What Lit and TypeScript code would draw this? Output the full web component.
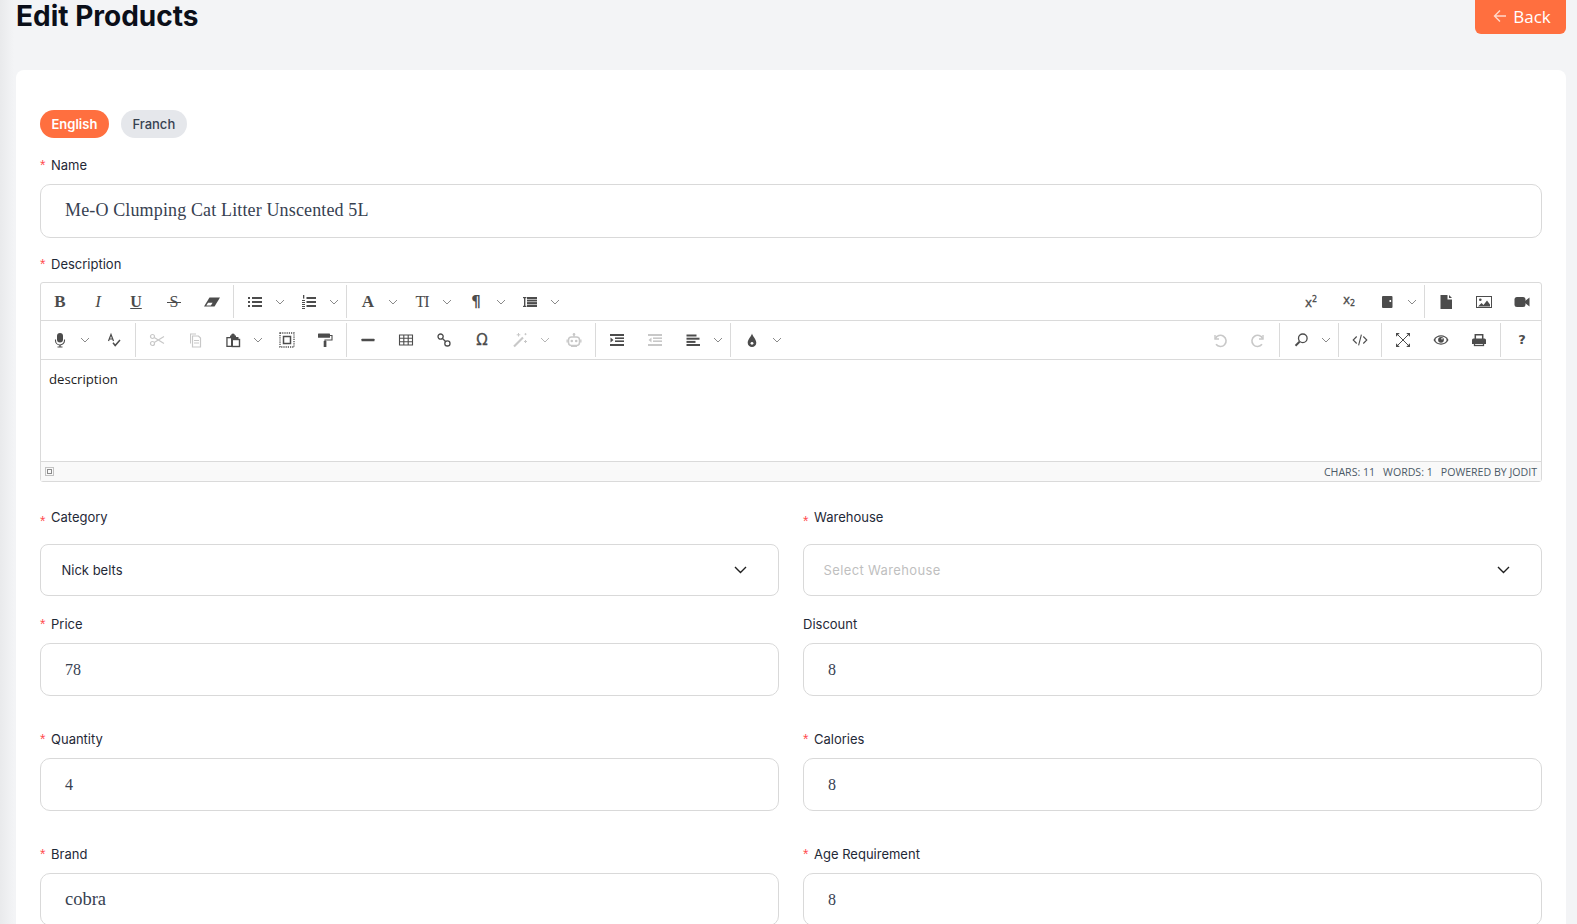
import { LitElement, html, css, svg } from "lit";
import { customElement } from "lit/decorators.js";

const icon = (body: unknown) => html`<svg class="ico" viewBox="0 0 16 16" fill="currentColor">${body}</svg>`;
const line = "fill:none;stroke:currentColor;";

const ICONS: Record<string, unknown> = {
  eraser: icon(svg`<path d="M5.5 3.500H16L10.5 12.500H0z"/><path d="M4 8.800h4.600l-1.700 2.700H2.300z" fill="#fff"/>`),
  list: icon(svg`<rect x="5" y="3" width="10" height="2"/><rect x="5" y="7" width="10" height="2"/><rect x="5" y="11" width="10" height="2"/><rect x="1" y="3" width="2" height="2"/><rect x="1" y="7" width="2" height="2"/><rect x="1" y="11" width="2" height="2"/>`),
  ol: icon(svg`<rect x="5.5" y="3" width="9.5" height="2"/><rect x="5.5" y="7" width="9.5" height="2"/><rect x="5.5" y="11" width="9.5" height="2"/><rect x="2" y="1" width="1.3" height="3.6"/><rect x="1" y="6" width="3" height="1"/><rect x="1" y="8" width="3" height="1"/><rect x="1" y="10" width="3" height="1"/><rect x="1" y="12" width="3" height="1"/><rect x="1" y="14" width="3" height="1"/>`),
  lineheight: icon(svg`<rect x="5" y="3" width="10" height="10"/><rect x="5" y="5" width="10" height=".6" fill="#fff"/><rect x="5" y="7.500" width="10" height=".6" fill="#fff"/><rect x="5" y="10" width="10" height=".6" fill="#fff"/><rect x="2" y="3" width="1.4" height="10"/><rect x="1" y="3" width="3.4" height="1.2"/><rect x="1" y="11.8" width="3.4" height="1.2"/>`),
  book: icon(svg`<path d="M4 2h8.5a1 1 0 0 1 1 1v10a1 1 0 0 1-1 1H4a1 1 0 0 1-1-1V3a1 1 0 0 1 1-1z"/><rect x="10.5" y="6" width="1.6" height="2" fill="#fff"/>`),
  file: icon(svg`<path d="M2.5 1H9.5V5.5H14V15H2.5z"/><path d="M11 1l3 3h-3z"/>`),
  image: icon(svg`<rect x=".5" y="2.5" width="15" height="11" style="${line}stroke-width:1"/><path d="M2 12.5l3.5-3.5 2 2 3.5-4.5 3 4v2z"/><circle cx="4.3" cy="5.8" r="1.3"/>`),
  video: icon(svg`<rect x=".5" y="3" width="11" height="10" rx="2.5"/><path d="M11 7l4.5-3.5v9L11 9z"/>`),
  mic: icon(svg`<rect x="5" y="1" width="6" height="9.4" rx="3"/><path d="M3.5 7.5v1a4.5 4.5 0 0 0 9 0v-1" style="${line}stroke-width:1.1"/><path d="M8 13v2M5.5 15h5" style="${line}stroke-width:1.2"/>`),
  spell: icon(svg`<path d="M2.500 9L5 2.500 7.500 9M3.400 7h3.200" style="${line}stroke-width:1.2"/><path d="M7 10.800l2.200 2.700 4.800-5.500" style="${line}stroke-width:1.500"/>`),
  cut: icon(svg`<circle cx="3.5" cy="4.5" r="2" style="${line}stroke-width:1.2"/><circle cx="3.5" cy="11.5" r="2" style="${line}stroke-width:1.2"/><path d="M5.2 5.5L15 11.5M5.2 10.5L15 4.5" style="${line}stroke-width:1.2"/>`),
  copy: icon(svg`<path d="M3 1.5h6v1H4v9H3z"/><path d="M5.5 4h6l2 2v9h-8z" style="${line}stroke-width:1.2"/><rect x="7" y="8" width="5" height="1"/><rect x="7" y="10.5" width="5" height="1"/>`),
  paste: icon(svg`<path d="M5 3.500h1.100a1.900 1.900 0 0 1 3.800 0H11v1.500h2.500v2H7.300v8H1.300V5H5z"/><rect x="2.600" y="6.300" width="3.400" height="7.400" fill="#fff"/><rect x="7.300" y="7.500" width="7.200" height="7" fill="#fff" style="${line}stroke-width:1.400"/>`),
  selectall: icon(svg`<rect x="1" y="1" width="14" height="14" style="${line}stroke-width:1.300;stroke-dasharray:1.200 1"/><rect x="4.5" y="4.5" width="7" height="7" style="${line}stroke-width:1.5"/>`),
  paint: icon(svg`<rect x="1" y="1.5" width="12" height="4.3" rx=".6"/><path d="M13 3.5h2V8H8v2" style="${line}stroke-width:1.1"/><rect x="6.7" y="9" width="2.7" height="6"/>`),
  hr: icon(svg`<rect x="1.5" y="6.7" width="13" height="2.6" rx=".6"/>`),
  table: icon(svg`<path d="M1.5 3h13v10h-13zM1.5 6.3h13M1.5 9.7h13M5.8 3v10M10.2 3v10" style="${line}stroke-width:1.1"/>`),
  link: icon(svg`<circle cx="4.6" cy="4.6" r="2.6" style="${line}stroke-width:1.300"/><circle cx="11.4" cy="11.4" r="2.6" style="${line}stroke-width:1.300"/><path d="M6 6l4 4" style="${line}stroke-width:1.300"/>`),
  magic: icon(svg`<path d="M2 14.5L11 5.5" style="${line}stroke-width:2.2"/><path d="M6.5 1v3.5M4.7 2.8h3.6M13.5 8v3M12 9.5h3M13.5 1.2v2M12.5 2.2h2" style="${line}stroke-width:1"/>`),
  robot: icon(svg`<rect x="2.5" y="5" width="11" height="8.6" rx="3" style="${line}stroke-width:1.5"/><circle cx="5.8" cy="9" r="1.3"/><circle cx="10.2" cy="9" r="1.3"/><circle cx="8" cy="2.4" r="1.3"/><rect x="7.5" y="3" width="1" height="2"/><rect x=".5" y="7.5" width="1.3" height="3"/><rect x="14.2" y="7.5" width="1.3" height="3"/><rect x="5" y="13.4" width="6" height="1.6"/>`),
  indent: icon(svg`<rect x="1" y="2" width="14" height="2"/><rect x="6" y="5.4" width="9" height="1.6"/><rect x="6" y="8.4" width="9" height="1.6"/><rect x="1" y="12" width="14" height="2"/><path d="M1.5 5.5l3 2.5-3 2.5z"/>`),
  outdent: icon(svg`<rect x="1" y="2" width="14" height="2"/><rect x="6" y="5.4" width="9" height="1.6"/><rect x="6" y="8.4" width="9" height="1.6"/><rect x="1" y="12" width="14" height="2"/><path d="M4.5 5.5l-3 2.5 3 2.5z"/>`),
  align: icon(svg`<rect x="1.5" y="2.5" width="10" height="2"/><rect x="1.5" y="5.7" width="13" height="2"/><rect x="1.5" y="8.9" width="9" height="2"/><rect x="1.5" y="12" width="13.5" height="2"/>`),
  drop: icon(svg`<path d="M8 1.5C7.5 4 3.7 7.5 3.7 10.8a4.3 4.3 0 0 0 8.6 0C12.3 7.5 8.5 4 8 1.5z"/><circle cx="8" cy="11.3" r="1.4" fill="#fff"/>`),
  undo: icon(svg`<path d="M3 3v4h4" style="${line}stroke-width:1.4"/><path d="M3.3 6.8A5.6 5.6 0 1 1 4 12.3" style="${line}stroke-width:1.6"/>`),
  redo: icon(svg`<path d="M13 3v4H9" style="${line}stroke-width:1.4"/><path d="M12.7 6.8A5.6 5.6 0 1 0 12 12.3" style="${line}stroke-width:1.6"/>`),
  search: icon(svg`<circle cx="9.8" cy="6.3" r="4.3" style="${line}stroke-width:1.300"/><path d="M6.500 9.700L2.500 13.700" style="${line}stroke-width:2"/>`),
  source: icon(svg`<path d="M4.7 4.5L1.2 8l3.5 3.5M11.3 4.5L14.8 8l-3.5 3.5M9.4 2.6L6.6 13.4" style="${line}stroke-width:1.1"/>`),
  full: icon(svg`<path d="M1.500 1.500l13 13M14.500 1.500l-13 13" style="${line}stroke-width:1"/><path d="M1 1h3.800L1 4.800zM15 1h-3.800L15 4.800zM1 15h3.800L1 11.200zM15 15h-3.800L15 11.200z"/>`),
  eye: icon(svg`<path d="M.5 8C3.500 1.800 12.500 1.800 15.500 8 12.500 14.200 3.500 14.200.5 8z"/><ellipse cx="8" cy="8" rx="5.600" ry="3.400" fill="#fff"/><circle cx="8" cy="7.800" r="2.900"/><circle cx="9" cy="6.800" r=".8" fill="#fff"/>`),
  print: icon(svg`<path d="M4.300 7V2.800h7.400V7" style="${line}stroke-width:1.500"/><path d="M2.500 6.500h11a1.500 1.500 0 0 1 1.500 1.500v4H1V8a1.500 1.500 0 0 1 1.500-1.500z"/><rect x="3.500" y="10" width="9" height="3.500" fill="#fff" style="${line}stroke-width:1.300"/>`),
};

const TEXTS: Record<string, unknown> = {
  bold: html`<span class="glyph serif b">B</span>`,
  italic: html`<span class="glyph serif i">I</span>`,
  underline: html`<span class="glyph serif u">U</span>`,
  strike: html`<span class="glyph serif s">S</span>`,
  color: html`<span class="glyph serif a">A</span>`,
  size: html`<span class="glyph serif ti">TI</span>`,
  para: html`<span class="glyph sans para">¶</span>`,
  sup: html`<span class="glyph sans sc">x<span class="sup">2</span></span>`,
  sub: html`<span class="glyph sans sc">x<span class="sub">2</span></span>`,
  omega: html`<span class="glyph sans omega">Ω</span>`,
  help: html`<span class="glyph sans help">?</span>`,
};

type Item = string;

const chevron = html`<span class="chev"><svg viewBox="0 0 10 6"><path d="M1 1l4 4 4-4"/></svg></span>`;

/* item syntax: name, "name>" has a dropdown arrow, "name~" is disabled, "|" is a separator, "-" pushes the rest right */
const ROW1: Item[] = ["bold","italic","underline","strike","eraser","|","list>","ol>","|","color>","size>","para>","lineheight>","-","sup","sub","book>","|","file","image","video"];
const ROW2: Item[] = ["mic>","spell","|","cut~","copy~","paste>","selectall","paint","|","hr","table","link","omega","magic~>","robot~","|","indent","outdent~","align>","|","drop>","-","undo~","redo~","|","search>","|","source","|","full","eye","print","|","help"];

@customElement("app-root")
export class AppRoot extends LitElement {
  static styles = css`
    :host { display: block; height: 924px; overflow: hidden; box-sizing: border-box; padding: 0 11px 0 16px;
      background: linear-gradient(to right, #e9eaec 0, #f3f4f6 14px); font-family: Inter, "Liberation Sans", sans-serif; color: #1f2937; }
    .head { display: flex; justify-content: space-between; align-items: flex-start; height: 34px; }
    h1 { margin: 0; font-size: 28px; line-height: 32px; font-weight: 700; color: #0b0f19; }
    .back { display: flex; align-items: center; justify-content: center; gap: 6px; width: 91px; height: 44px; margin-top: -10px; padding: 8px 0 0 3px; box-sizing: border-box;
      background: #ff6f3f; color: #fff; border-radius: 6px; font-family: "Open Sans", sans-serif; font-size: 17px; }
    .back svg { width: 14px; height: 14px; fill: none; stroke: #ffd9cb; stroke-width: 1.4; }
    .card { margin-top: 36px; background: #fff; border-radius: 8px; padding: 40px 24px; height: 900px; }
    .pills { display: flex; gap: 12px; }
    .pill { height: 28px; line-height: 28px; padding: 0 11.500px; border-radius: 14px; font-size: 13px; font-weight: 500; background: #e5e7eb; color: #374151; }
    .pill.on { background: #ff6f3f; color: #fff; font-weight: 600; }
    .label { display: flex; align-items: center; height: 20px; font-size: 13px; color: #1f2937; }
    .star { color: #ff4d4f; width: 11px; font-family: "Liberation Sans", sans-serif; font-size: 14px; }
    .star.low { position: relative; top: 4px; }
    .input { box-sizing: border-box; display: flex; align-items: center; height: 53px; margin-top: 9px; padding: 0 24px; border: 1px solid #d9d9d9; border-radius: 10px;
      font-family: "Liberation Serif", serif; font-size: 16px; color: #374151; }
    .input.word { font-size: 18.500px; }
    .input.name { height: 54px; font-size: 18px; letter-spacing: .14px; padding-bottom: 1px; }
    .desc { margin-top: 16px; }
    .editor { margin-top: 8px; height: 200px; box-sizing: border-box; border: 1px solid #dadada; border-radius: 3px; display: flex; flex-direction: column; }
    .tb { display: flex; align-items: stretch; height: 37px; flex: none; border-bottom: 1px solid #dadada; color: #4c4c4c; }
    .tb.two { height: 38px; }
    .btn { display: flex; align-items: center; justify-content: center; width: 38px; flex: none; }
    .btn.off { color: #c8c8c8; }
    .ico { width: 16px; height: 16px; display: block; }
    .chev { width: 12px; margin-right: 4px; flex: none; display: flex; align-items: center; justify-content: center; color: #8a8a8a; }
    .off + .chev { color: #b5b5b5; }
    .chev svg { width: 10px; height: 6px; fill: none; stroke: currentColor; stroke-width: 1; }
    .sep { width: 5px; flex: none; display: flex; justify-content: center; padding: 2px 0; box-sizing: border-box; }
    .sep::after { content: ""; width: 1px; background: #dadada; }
    .push { flex: 1; }
    .glyph { line-height: 16px; display: block; }
    .serif { font-family: "Liberation Serif", serif; font-weight: 700; font-size: 17px; }
    .sans { font-family: "DejaVu Sans", sans-serif; font-weight: 700; }
    .i { font-style: italic; font-weight: 400; }
    .u { text-decoration: underline; font-size: 16px; }
    .s { position: relative; font-size: 16px; font-weight: 400; }
    .s::after { content: ""; position: absolute; left: -3px; right: -3px; top: 8px; height: 1px; background: currentColor; }
    .ti { font-size: 16px; font-weight: 400; letter-spacing: -1px; }
    .para { font-size: 15px; }
    .sc { font-size: 12px; font-weight: 400; -webkit-text-stroke: .3px; }
    .sup { font-size: 8px; vertical-align: 5px; }
    .sub { font-size: 8px; vertical-align: -2px; }
    .omega { font-size: 15px; font-weight: 400; -webkit-text-stroke: .3px; }
    .help { font-size: 13px; }
    .body { flex: 1; padding: 10px 8px; font-family: "Open Sans", sans-serif; font-size: 13.200px; line-height: 18px; color: #212121; }
    .status { height: 20px; flex: none; box-sizing: border-box; border-top: 1px solid #dadada; background: #f9f9f9; display: flex; align-items: center; justify-content: flex-end; gap: 8px; padding: 0 4px;
      font-family: "Open Sans", sans-serif; font-size: 10.600px; color: #4c5a67; }
    .grip { margin-right: auto; color: #8a8a8a; }
    .grip svg { width: 9px; height: 9px; display: block; }
    .row { display: grid; grid-template-columns: 1fr 1fr; column-gap: 24px; }
    .r-cat { margin-top: 25px; }
    .r-price { margin-top: 18px; }
    .r-qty { margin-top: 33px; }
    .select { box-sizing: border-box; display: flex; align-items: center; justify-content: space-between; height: 52px; margin-top: 17px; padding: 0 31px 0 20.500px; border: 1px solid #d9d9d9; border-radius: 8px; font-size: 13px; color: #1f2937; }
    .select .ph { color: #bfbfbf; letter-spacing: .37px; margin-left: -1px; }
    .select svg { width: 13px; height: 8px; fill: none; stroke: #1f1f1f; stroke-width: 1.400; }
    .mt17 { margin-top: 17px; }
  `;

  private item(it: Item) {
    if (it === "|") return html`<span class="sep"></span>`;
    if (it === "-") return html`<span class="push"></span>`;
    const off = it.includes("~");
    const drop = it.includes(">");
    const name = it.replace(/[~>]/g, "");
    return html`<span class="btn ${off ? "off" : ""}">${ICONS[name] ?? TEXTS[name]}</span>${drop ? chevron : ""}`;
  }

  private label(text: string, req = true, low = false) {
    return html`<div class="label">${req ? html`<span class="star ${low ? "low" : ""}">*</span>` : ""}${text}</div>`;
  }

  private field(text: string, value: string, req = true) {
    return html`<div>${this.label(text, req)}<div class="input ${/^\d+$/.test(value) ? "" : "word"}">${value}</div></div>`;
  }

  private select(text: string, value: string, ph = false) {
    return html`<div>${this.label(text, true, true)}
      <div class="select"><span class="${ph ? "ph" : ""}">${value}</span><svg viewBox="0 0 13 8"><path d="M1 1l5.500 5.500L12 1"/></svg></div></div>`;
  }

  render() {
    return html`
      <div class="head">
        <h1>Edit Products</h1>
        <div class="back"><svg viewBox="0 0 14 14"><path d="M13 7H1.500M7 1.500L1.500 7 7 12.500"/></svg>Back</div>
      </div>
      <div class="card">
        <div class="pills"><span class="pill on">English</span><span class="pill">Franch</span></div>
        <div class="mt17">${this.label("Name")}<div class="input name">Me-O Clumping Cat Litter Unscented 5L</div></div>
        <div class="desc">${this.label("Description")}
          <div class="editor">
            <div class="tb">${ROW1.map((i) => this.item(i))}</div>
            <div class="tb two">${ROW2.map((i) => this.item(i))}</div>
            <div class="body">description</div>
            <div class="status">
              <span class="grip"><svg viewBox="0 0 9 9" fill="none" stroke="currentColor"><rect x=".5" y=".5" width="8" height="8" stroke-dasharray="1 1"/><rect x="2.500" y="2.500" width="4" height="4"/></svg></span>
              <span>CHARS: 11</span><span>WORDS: 1</span><span>POWERED BY JODIT</span>
            </div>
          </div>
        </div>
        <div class="row r-cat">${this.select("Category", "Nick belts")}${this.select("Warehouse", "Select Warehouse", true)}</div>
        <div class="row r-price">${this.field("Price", "78")}${this.field("Discount", "8", false)}</div>
        <div class="row r-qty">${this.field("Quantity", "4")}${this.field("Calories", "8")}</div>
        <div class="row r-qty">${this.field("Brand", "cobra")}${this.field("Age Requirement", "8")}</div>
      </div>
    `;
  }
}
